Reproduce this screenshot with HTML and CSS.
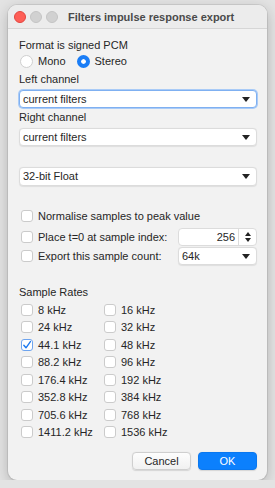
FILE: index.html
```html
<!DOCTYPE html>
<html lang="en">
<head>
    <meta charset="UTF-8">
    <title>Filters impulse response export</title>
    <link rel="stylesheet" href="styles.css">
</head>
<body>
    <div class="window">
        <div class="titlebar">
            <span class="light close"></span>
            <span class="light"></span>
            <span class="light"></span>
            <span class="title">Filters impulse response export</span>
        </div>

        <div class="content">
            <div class="label">Format is signed PCM</div>
            <div class="radios">
                <span class="radio"></span><span class="radio-text mono">Mono</span>
                <span class="radio on"></span><span class="radio-text">Stereo</span>
            </div>

            <div class="label gap-s">Left channel</div>
            <div class="select focused">current filters<span class="arrow"></span></div>

            <div class="label gap-s">Right channel</div>
            <div class="select">current filters<span class="arrow"></span></div>

            <div class="select gap-l">32-bit Float<span class="arrow"></span></div>

            <div class="check-row first">
                <span class="box"></span><span>Normalise samples to peak value</span>
            </div>
            <div class="check-row place">
                <span class="box"></span><span class="grow">Place t=0 at sample index:</span>
                <div class="spin">
                    <span class="spin-value">256</span>
                    <span class="stepper">
                        <span class="up"></span>
                        <span class="down"></span>
                    </span>
                </div>
            </div>
            <div class="check-row export">
                <span class="box"></span><span class="grow">Export this sample count:</span>
                <div class="select small">64k<span class="arrow"></span></div>
            </div>

            <div class="label rates-title">Sample Rates</div>
            <div class="rates">
                <div class="rate"><span class="box"></span>8 kHz</div>
                <div class="rate"><span class="box"></span>16 kHz</div>
                <div class="rate"><span class="box"></span>24 kHz</div>
                <div class="rate"><span class="box"></span>32 kHz</div>
                <div class="rate"><span class="box checked"><svg width="10" height="10" viewBox="0 0 10 10"><path d="M1.8 5.2 L4 7.8 L8.4 1.6" fill="none" stroke="#1f7bf0" stroke-width="1.4" stroke-linecap="round" stroke-linejoin="round"/></svg></span>44.1 kHz</div>
                <div class="rate"><span class="box"></span>48 kHz</div>
                <div class="rate"><span class="box"></span>88.2 kHz</div>
                <div class="rate"><span class="box"></span>96 kHz</div>
                <div class="rate"><span class="box"></span>176.4 kHz</div>
                <div class="rate"><span class="box"></span>192 kHz</div>
                <div class="rate"><span class="box"></span>352.8 kHz</div>
                <div class="rate"><span class="box"></span>384 kHz</div>
                <div class="rate"><span class="box"></span>705.6 kHz</div>
                <div class="rate"><span class="box"></span>768 kHz</div>
                <div class="rate"><span class="box"></span>1411.2 kHz</div>
                <div class="rate"><span class="box"></span>1536 kHz</div>
            </div>

            <div class="buttons">
                <button type="button" class="btn">Cancel</button>
                <button type="button" class="btn ok">OK</button>
            </div>
        </div>
    </div>
</body>
</html>
```

FILE: styles.css
```css
body {
    margin: 0;
    background-color: #e3e3e3;
    font-family: 'Liberation Sans', Arial, sans-serif;
    font-size: 11px;
    color: #262626;
}

.window {
    width: 259px;
    margin: 5px 0 0 8px;
    background-color: #f2f2f2;
    border-radius: 9px;
    box-shadow: 0 0 0 1px rgba(0, 0, 0, 0.08), 0 4px 14px rgba(0, 0, 0, 0.22);
    overflow: hidden;
}

.titlebar {
    height: 23px;
    display: flex;
    align-items: center;
    padding-left: 6px;
    background-color: #ececec;
    border-bottom: 1px solid #d6d6d6;
}

.light {
    width: 12px;
    height: 12px;
    border-radius: 50%;
    background-color: #d1d1d1;
    border: 0.5px solid #c4c4c4;
    box-sizing: border-box;
    margin-right: 4px;
}

.light.close {
    background-color: #fe5f57;
    border-color: #e2463f;
}

.title {
    margin-left: 6px;
    font-weight: bold;
    color: #4a4a4a;
}

.content {
    padding: 9px 10px 10px 11px;
    display: flex;
    flex-direction: column;
}

.label {
    line-height: 14px;
    height: 14px;
}

.gap-s {
    margin-top: 2px;
}

.radios {
    height: 18px;
    display: flex;
    align-items: center;
    padding-left: 1px;
}

.radio {
    width: 13px;
    height: 13px;
    box-sizing: border-box;
    border-radius: 50%;
    background-color: #fff;
    border: 1px solid #cfcfcf;
    margin-right: 5px;
}

.radio.on {
    background-color: #1a7df6;
    border: 4px solid #1a7df6;
    box-shadow: inset 0 0 0 10px #fff;
}

.radio-text.mono {
    margin-right: 11px;
}

.select {
    position: relative;
    height: 18px;
    margin-top: 4px;
    box-sizing: border-box;
    background-color: #fff;
    border: 1px solid #dcdcdc;
    border-radius: 4px;
    padding-left: 3px;
    line-height: 16px;
    box-shadow: 0 0.5px 1px rgba(0, 0, 0, 0.08);
}

.select.focused {
    border-color: #7fb0f1;
    box-shadow: 0 0 0 1px #a9cbf7;
}

.gap-l {
    margin-top: 21px;
    height: 19px;
    line-height: 17px;
}

.arrow {
    position: absolute;
    right: 6px;
    top: 6px;
    width: 0;
    height: 0;
    border-left: 4px solid transparent;
    border-right: 4px solid transparent;
    border-top: 5px solid #222;
}

.check-row {
    height: 18px;
    display: flex;
    align-items: center;
    padding-left: 2px;
}

.check-row.first {
    margin-top: 21px;
}

.check-row.place {
    margin-top: 3px;
}

.check-row.export {
    margin-top: 1px;
}

.grow {
    flex: 1;
}

.box {
    width: 12px;
    height: 12px;
    box-sizing: border-box;
    flex: none;
    background-color: #fff;
    border: 1px solid #cbcbcb;
    border-radius: 3px;
    margin-right: 5px;
    display: flex;
    align-items: center;
    justify-content: center;
}

.box.checked {
    border-color: #6ea4ee;
}

.spin {
    width: 79px;
    height: 18px;
    box-sizing: border-box;
    display: flex;
    background-color: #fff;
    border: 1px solid #dcdcdc;
    border-radius: 4px;
}

.spin-value {
    flex: 1;
    text-align: right;
    padding-right: 3px;
    line-height: 16px;
}

.stepper {
    width: 17px;
    border-left: 1px solid #dcdcdc;
    display: flex;
    flex-direction: column;
    align-items: center;
    justify-content: center;
    gap: 2px;
}

.up {
    border-left: 3.5px solid transparent;
    border-right: 3.5px solid transparent;
    border-bottom: 4px solid #222;
}

.down {
    border-left: 3.5px solid transparent;
    border-right: 3.5px solid transparent;
    border-top: 4px solid #222;
}

.select.small {
    width: 79px;
    margin-top: 0;
}

.rates-title {
    margin-top: 20px;
}

.rates {
    margin-top: 2px;
    display: grid;
    grid-template-columns: 83px 1fr;
    grid-auto-rows: 17.5px;
    padding-left: 2px;
}

.rate {
    display: flex;
    align-items: center;
}

.buttons {
    margin-top: 11px;
    display: flex;
    justify-content: flex-end;
    gap: 7px;
}

.btn {
    width: 59px;
    height: 18px;
    padding: 0;
    font-family: inherit;
    font-size: 11px;
    color: #262626;
    background: linear-gradient(#fdfdfd, #f1f1f1);
    border: 1px solid #cfcfcf;
    border-radius: 4px;
    box-shadow: 0 0.5px 1px rgba(0, 0, 0, 0.12);
}

.btn.ok {
    background: #0c80fd;
    border-color: #0a78f0;
    color: #fff;
}
```
